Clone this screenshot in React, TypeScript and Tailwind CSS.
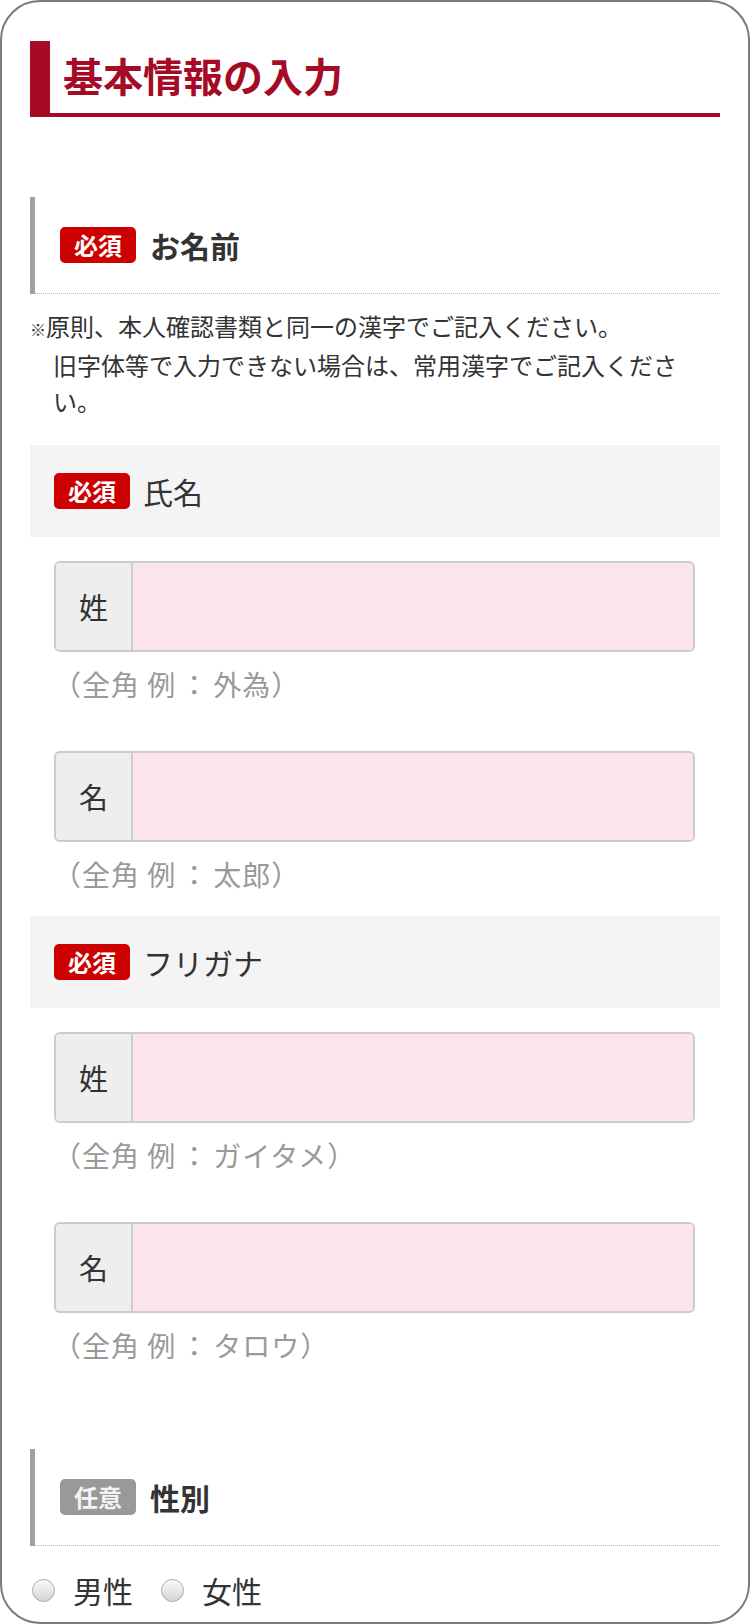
import React from "react";

function Badge({ label, gray }: { label: string; gray?: boolean }) {
  return (
    <span
      className={
        gray
          ? "flex h-[36px] w-[76px] items-center justify-center rounded-[5px] bg-[#999999] text-[24px] font-bold leading-none text-[#f4f4f4]"
          : "flex h-[36px] w-[76px] items-center justify-center rounded-[5px] bg-[#cc0000] text-[24px] font-bold leading-none text-white"
      }
    >
      {label}
    </span>
  );
}

function SectionHead({ title, gray }: { title: string; gray?: boolean }) {
  return (
    <div className="border-l-[5px] border-[#a0a0a0]">
      <div className="flex h-[97px] items-center gap-[14px] border-b border-dotted border-[#bdbdbd] pl-[25px]">
        <Badge label={gray ? "任意" : "必須"} gray={gray} />
        <span className="text-[30px] font-bold leading-none text-[#333333]">{title}</span>
      </div>
    </div>
  );
}

function SubHead({ title }: { title: string }) {
  return (
    <div className="flex h-[92px] items-center gap-[13px] bg-[#f4f4f4] pl-[24px]">
      <Badge label="必須" />
      <span className="text-[30px] leading-none text-[#333333]">{title}</span>
    </div>
  );
}

function Field({ label, example, first }: { label: string; example: string; first?: boolean }) {
  return (
    <div className={first ? "mt-[24px]" : "mt-[47px]"}>
      <div className="ml-[24px] mr-[25px] flex h-[91px] overflow-hidden rounded-[6px] border-2 border-[#cccccc]">
        <div className="flex w-[77px] shrink-0 items-center justify-center border-r-2 border-[#cccccc] bg-[#eeeeee] text-[29px] text-[#333333]">
          {label}
        </div>
        <div className="flex-1 bg-[#fbe5ea]" />
      </div>
      <p className="mt-[12px] pl-[23px] text-[28px] leading-[40px] tracking-[1px] text-[#999999]">
        （全角 例<span className="mx-[4px]">：</span>
        {example}）
      </p>
    </div>
  );
}

function Radio({ label, className }: { label: string; className?: string }) {
  return (
    <div className={"flex items-center " + (className ?? "")}>
      <span className="h-[23px] w-[23px] rounded-full border border-[#a8a8a8] bg-gradient-to-b from-[#fafafa] to-[#d4d4d4] shadow-[inset_0_1px_1px_rgba(255,255,255,0.8)]" />
      <span className="ml-[18px] text-[30px] leading-none text-[#333333]">{label}</span>
    </div>
  );
}

export default function App() {
  return (
    <div className="box-border h-[1624px] w-[750px] overflow-hidden rounded-[40px] border-2 border-[#7a7a7a] bg-white px-[28px] font-['Noto_Sans_CJK_JP',sans-serif] [text-spacing-trim:space-all]">
      <div className="mt-[39px] flex h-[76px] items-center border-b-4 border-l-[20px] border-[#a50b24] pb-[4px] pl-[13px]">
        <h1 className="text-[40px] font-bold leading-none text-[#a50b24]">基本情報の入力</h1>
      </div>

      <div className="mt-[80px]">
        <SectionHead title="お名前" />
      </div>

      <p className="mt-[14px] pl-[23px] pr-[30px] -indent-[23px] text-[24px] leading-[36px] text-[#333333]">
        <span className="text-[16px]">※</span>原則、本人確認書類と同一の漢字でご記入ください。
        <br />
        旧字体等で入力できない場合は、常用漢字でご記入ください。
      </p>

      <div className="mt-[26px]">
        <SubHead title="氏名" />
      </div>
      <Field first label="姓" example="外為" />
      <Field label="名" example="太郎" />

      <div className="mt-[22px]">
        <SubHead title="フリガナ" />
      </div>
      <Field first label="姓" example="ガイタメ" />
      <Field label="名" example="タロウ" />

      <div className="mt-[84px]">
        <SectionHead title="性別" gray />
      </div>

      <div className="mt-[14px] flex h-[60px] items-center">
        <Radio label="男性" className="ml-[2px]" />
        <Radio label="女性" className="ml-[28px]" />
      </div>
    </div>
  );
}
